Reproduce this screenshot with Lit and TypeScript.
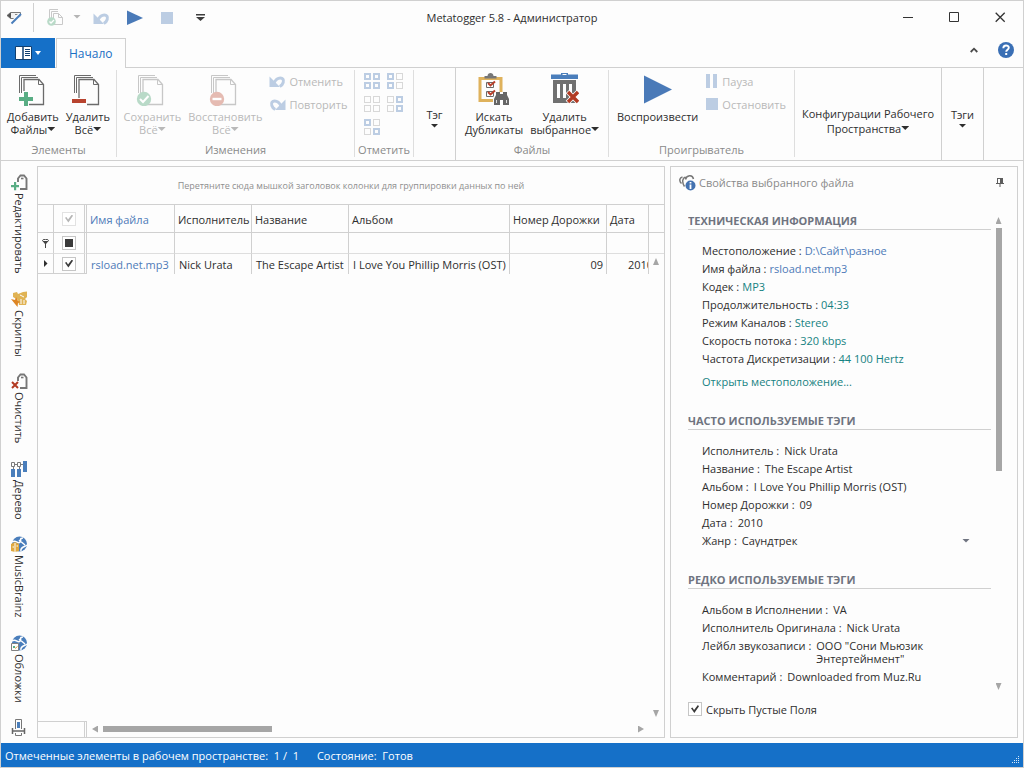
import { LitElement, html, css, svg, nothing } from "lit";
import { customElement, state } from "lit/decorators.js";
import { classMap } from "lit/directives/class-map.js";

/* ---------- icons ---------- */

const sheets = svg`
  <g fill="none" stroke="#6b6b6b" stroke-width="1">
    <path d="M2.5 20V2.5H19" /><path d="M4.5 20V4.5H21" />
    <path fill="#fdfdfd" d="M7 31.500V6.500H22L26.500 11.500V31.500Z" stroke-width="1.300" />
    <path d="M21.500 6.500V11.500H26.500" />
  </g>`;

const addIcon = html`<svg width="32" height="33" viewBox="0 0 32 33">${sheets}
  <path d="M6 18h6v5h5v6h-5v4H6v-4H1v-6h5z" fill="#fdfdfd" /><path d="M7 19h4v5h5v4h-5v5H7v-5H2v-4h5z" fill="#59ad84" /></svg>`;
const removeIcon = html`<svg width="32" height="33" viewBox="0 0 32 33">${sheets}
  <path d="M0 25h15v8H0z" fill="#fdfdfd" /><path d="M0 26h14v4H0z" fill="#b8432f" /></svg>`;
const saveIcon = html`<svg width="32" height="33" viewBox="0 0 32 33"><g opacity=".36">${sheets}</g>
  <circle cx="8" cy="26" r="7.200" fill="#b9dac8" /><path d="M4 26l3 3 5.500-6" fill="none" stroke="#fff" stroke-width="2" /></svg>`;
const restoreIcon = html`<svg width="32" height="33" viewBox="0 0 32 33"><g opacity=".36">${sheets}</g>
  <circle cx="8" cy="26" r="7.200" fill="#e5bbb2" /><path d="M3.500 26h9" stroke="#fff" stroke-width="2.400" /></svg>`;

const duplicatesIcon = html`<svg width="34" height="33" viewBox="0 0 34 33">
  <path d="M3 5.500h21V27.500H3z" fill="#fdfdfd" stroke="#dfb25c" stroke-width="3" />
  <path d="M7.500 5.500V3h3c0-4 6-4 6 0h3v2.500z" fill="#767676" />
  <g fill="none" stroke="#6b6b6b"><path d="M9.500 9.500h7v5h-7zM9.500 18.500h7v5h-7z" /></g>
  <g fill="none" stroke="#b9402b" stroke-width="2"><path d="M11 10l2.500 2.500L18 8.500M11 19l2.500 2.500L18 17.500" /></g>
  <path d="M16 32v-7l3-6h12v13z" fill="#fdfdfd" />
  <path d="M17 32v-6l2-4v-3h4v2h3v-2h4v3l2 4v6h-6v-5h-3v5z" fill="#666" />
  <path d="M19.500 27v3M29.500 27v3" stroke="#ddd" /></svg>`;
const trashIcon = html`<svg width="28" height="33" viewBox="0 0 28 33">
  <path d="M0 1.500h10V0h7v1.500h10V6H0z" fill="#4a7ebb" /><path d="M11.500 1.500h4" stroke="#fdfdfd" />
  <path d="M2 7h23v23H2z" fill="#707070" />
  <path d="M6 11h3v14H6zM12 11h3v14h-3zM18 11h3v14h-3z" fill="#fdfdfd" />
  <path d="M16.500 18.500l11 11M27.500 18.500l-11 11" stroke="#fdfdfd" stroke-width="5" />
  <path d="M17 19l10 10M27 19L17 29" stroke="#b23a22" stroke-width="3.400" /></svg>`;
const playBig = html`<svg width="28" height="33" viewBox="0 0 28 33"><path d="M0 2.500l28 14L0 30.500z" fill="#4a7ab8" /></svg>`;

const undoIcon = html`<svg width="17" height="14" viewBox="0 0 17 14">
  <path d="M.5 2.500V13H11z" fill="#bccde3" /><path d="M5 9C8 2 16 2.500 14.200 8.500C13.600 10.500 12.500 11.500 10.800 12.500" fill="none" stroke="#bccde3" stroke-width="3" /></svg>`;
const redoIcon = html`<svg width="17" height="14" viewBox="0 0 17 14">
  <path d="M16.500 2.500V13H6z" fill="#bccde3" /><path d="M12 9C9 2 1 2.500 2.800 8.500C3.400 10.500 4.500 11.500 6.200 12.500" fill="none" stroke="#bccde3" stroke-width="3" /></svg>`;
const pauseIcon = html`<svg width="14" height="14" viewBox="0 0 14 14"><path d="M1 0h4v14H1zM8 0h4v14H8z" fill="#bccde3" /></svg>`;
const stopIcon = html`<svg width="14" height="14" viewBox="0 0 14 14"><path d="M1 1h12v12H1z" fill="#bccde3" /></svg>`;

/* Four small boxes; the mask says which of them are marked. */
const markIcon = (mask: string) => html`<svg width="17" height="17" viewBox="0 0 17 17">
  ${[...mask].map((on, i) => {
    const x = (i % 2) * 9, y = Math.floor(i / 2) * 9;
    return on === "1"
      ? svg`<rect x=${x + 1} y=${y + 1} width="5" height="5" fill="none" stroke="#bccde3" stroke-width="2" />`
      : svg`<rect x=${x + 0.5} y=${y + 0.5} width="6" height="6" fill="none" stroke="#d8d8d8" />`;
  })}</svg>`;

const appIcon = html`<svg width="17" height="16" viewBox="0 0 17 16">
  <path d="M4.500 2.500H14.500V6.500L9 8.500H4.500L1 5.500z" fill="#f2f2f2" stroke="#7a7a7a" />
  <path d="M1 5.500l4-3v6z" fill="#555" /><path d="M9 4.500h5" stroke="#888" />
  <path d="M5.500 13.500L14 4.500" stroke="#fdfdfd" stroke-width="4" /><path d="M5.500 13.500L15 4" stroke="#4a7ebb" stroke-width="2" /></svg>`;
const quickSave = html`<svg width="17" height="17" viewBox="0 0 17 17">
  <g fill="none" stroke="#c9c9c9"><path d="M2.500 9V.5H11M4.500 9V2.500H11" /><path d="M6.500 15.500V4.500h5l4 4v7zM11.500 4.500v4h4" fill="#fdfdfd" /></g>
  <circle cx="4.500" cy="12.500" r="4.300" fill="#b9dac8" /><path d="M2.500 12.500l1.500 1.500 3-3" fill="none" stroke="#fff" stroke-width="1.300" /></svg>`;
const quickPlay = html`<svg width="16" height="16" viewBox="0 0 16 16"><path d="M0 .5l16 7.500-16 7z" fill="#4a7ab8" /></svg>`;
const customizeIcon = html`<svg width="9" height="7" viewBox="0 0 9 7"><path d="M0 0h9v1.500H0zM0 3h9L4.500 7z" fill="#3c3c3c" /></svg>`;
const menuIcon = html`<svg width="17" height="14" viewBox="0 0 17 14">
  <path d="M.5.500h16v13H.5z" fill="#fff" stroke="#103f70" /><path d="M8 1v12" stroke="#103f70" stroke-width="1.500" />
  <path d="M10 3.500h5M10 5.500h5M10 7.500h5M10 9.500h5" stroke="#103f70" /></svg>`;
const helpIcon = html`<svg width="16" height="16" viewBox="0 0 16 16"><circle cx="8" cy="8" r="8" fill="#3a6fb5" />
  <path d="M5.300 6.300c0-3.800 5.500-3.500 5.500-.6 0 1.900-2.600 2-2.600 4" fill="none" stroke="#fff" stroke-width="1.900" /><path d="M7.200 11h2v2h-2z" fill="#fff" /></svg>`;
const collapseIcon = html`<svg width="8" height="6" viewBox="0 0 8 6"><path d="M.7 5L4 1.700 7.300 5" fill="none" stroke="#4a4a4a" stroke-width="1.800" /></svg>`;
const minIcon = html`<svg width="11" height="11" viewBox="0 0 11 11"><path d="M0 5.500h10" stroke="#333" /></svg>`;
const maxIcon = html`<svg width="11" height="11" viewBox="0 0 11 11"><path d="M.5.500h9v9h-9z" fill="none" stroke="#333" /></svg>`;
const closeIcon = html`<svg width="11" height="11" viewBox="0 0 11 11"><path d="M.7.700l9 9M9.700.700l-9 9" stroke="#333" stroke-width="1.300" /></svg>`;

const tagOutline = svg`<path d="M7 8V4.500L9.500 1.500h3.500l2.500 3v10.500H9" fill="none" stroke="#777" stroke-width="1.900" /><path d="M10 4.500h2.500" stroke="#777" stroke-width="1.600" />`;
const globe = svg`<circle cx="8.500" cy="8" r="7.500" fill="#4a7ebb" />
  <path d="M1 6c4-3 6 3 8 0s-1-4 3-4M10 15c-1-4 4-4 6-6M8 4l6 5" fill="none" stroke="#fff" stroke-width="1.500" />`;
const sideIcons: Record<string, unknown> = {
  edit: html`<svg width="17" height="17" viewBox="0 0 17 17">${tagOutline}<path d="M3 8h2.200v3H8v2.200H5.200v3H3v-3H0V11h3z" fill="#59ad84" /></svg>`,
  scripts: html`<svg width="17" height="17" viewBox="0 0 17 17">
    <path d="M2 2l4-1 1 2 5-2 4-.5V6l-2 2 2 2-1 4H8L7 9 2 6z" fill="#e0b354" />
    <path d="M0 8l4 1 1-3 2 4 3 1-3 1-.5 4L4 13z" fill="#dd8523" /><path d="M9 4l4 2M10 8v5M13 9v4" stroke="#fdfdfd" /></svg>`,
  clear: html`<svg width="17" height="17" viewBox="0 0 17 17">${tagOutline}<path d="M1 9l6 6M7 9l-6 6" stroke="#b23a22" stroke-width="2" /></svg>`,
  tree: html`<svg width="17" height="17" viewBox="0 0 17 17"><g fill="none" stroke="#7b7b7b"><path d="M.5 1.500h3v4h-3zM6.500 1.500h3v4h-3zM3.500 3.500h3M9.500 3.500H12M2.500 6v3M8.500 6v3" /></g>
    <path d="M12 0h4v11h-4zM0 8h4v8H0zM6 8h4v8H6z" fill="#4a7ebb" /></svg>`,
  brainz: html`<svg width="17" height="17" viewBox="0 0 17 17">${globe}<path d="M0 8l4-2 4 2v7l-4 1-4-1z" fill="#dfa83f" /><path d="M4 7v9M1.500 11h1.500M5.500 10H7" stroke="#fff" /></svg>`,
  covers: html`<svg width="17" height="17" viewBox="0 0 17 17">${globe}<path d="M.5 8.500h7v7h-7z" fill="#fdfdfd" stroke="#808080" /><path d="M2 11h2v2H2z" fill="#59ad84" /><path d="M4 13.500l2.500-2" stroke="#e0a33f" /></svg>`,
  print: html`<svg width="17" height="17" viewBox="0 0 17 17"><path d="M4.500 10V.5h6V10" fill="none" stroke="#777" /><path d="M6 3h3v6H6z" fill="#4a7ebb" />
    <path d="M1.500 9v6M13.500 9v6M1 12h13" stroke="#666" stroke-width="1.500" /><path d="M4.500 14v2.500h6V14" fill="none" stroke="#777" /></svg>`,
};
const propertiesIcon = html`<svg width="17" height="17" viewBox="0 0 17 17">
  <g fill="none" stroke="#777" stroke-width="1.500"><path d="M2.500 9.500C-.5 6.500 1 3.500 3.500 3M5.500 12.500C2.500 8 3.500 4 6.500 3M6.500 5.500C7.500 1 13.500 0 14.500 5" /></g>
  <circle cx="11.500" cy="11.500" r="5" fill="#4472b0" /><path d="M11.500 8v1.500M11.500 10.500V15" stroke="#fff" stroke-width="1.800" /></svg>`;
const pinIcon = html`<svg width="8" height="9" viewBox="0 0 8 9"><path d="M1.500 0v5M0 5.500h8M4 6v3M1 .5h6" stroke="#5d5d5d" fill="none" /><path d="M4 0h3v5H4z" fill="#5d5d5d" /></svg>`;
const filterIcon = html`<svg width="7" height="9" viewBox="0 0 7 9"><ellipse cx="3.500" cy="1.500" rx="3" ry="1.200" fill="none" stroke="#444" /><path d="M.5 2l2.500 3v4h1V5l2.500-3z" fill="#444" /></svg>`;
const gripIcon = html`<svg width="8" height="8" viewBox="0 0 8 8">${[[6, 0], [4, 2], [6, 2], [2, 4], [4, 4], [6, 4], [0, 6], [2, 6], [4, 6], [6, 6]].map(
  ([x, y]) => svg`<rect x=${x} y=${y} width="1" height="1" fill="#d6e8f8" />`)}</svg>`;

const caret = html`<i class="caret"></i>`;

/* ---------- data ---------- */

const sideTabs = [
  ["edit", "Редактировать"], ["scripts", "Скрипты"], ["clear", "Очистить"], ["tree", "Дерево"],
  ["brainz", "MusicBrainz"], ["covers", "Обложки"], ["print", ""],
];
const columns = ["Имя файла", "Исполнитель", "Название", "Альбом", "Номер Дорожки", "Дата"];
const technical = [
  ["Местоположение :", "D:\\Сайт\\разное", "blue"], ["Имя файла :", "rsload.net.mp3", "blue"],
  ["Кодек :", "MP3", "teal"], ["Продолжительность :", "04:33", "teal"], ["Режим Каналов :", "Stereo", "teal"],
  ["Скорость потока :", "320 kbps", "teal"], ["Частота Дискретизации :", "44 100 Hertz", "teal"],
];
const common = [
  ["Исполнитель :", "Nick Urata"], ["Название :", "The Escape Artist"], ["Альбом :", "I Love You Phillip Morris (OST)"],
  ["Номер Дорожки :", "09"], ["Дата :", "2010"],
];
const rare = [
  ["Альбом в Исполнении :", "VA"], ["Исполнитель Оригинала :", "Nick Urata"],
  ["Лейбл звукозаписи :", 'ООО "Сони Мьюзик Энтертейнмент"'], ["Комментарий :", "Downloaded from Muz.Ru"],
];

const base = css`
  :host { --line: #d0d0d0; --soft: #dedede; --blue: #1570c8; --bg: #fdfdfd; --ink: #2e2e2e; }
  * { box-sizing: border-box; }
  svg { display: block; flex: none; }
  button { font: inherit; color: inherit; background: none; border: 0; margin: 0; padding: 0; }
  .caret { display: inline-block; width: 8px; height: 4px; background: currentColor; clip-path: polygon(0 0, 100% 0, 50% 100%); vertical-align: 3px; }
  .check { appearance: none; flex: none; display: block; width: 14px; height: 14px; margin: 0; border: 1px solid #c6c6c6; background: #fff; }
  .check:checked::before { content: ""; display: block; width: 8px; height: 8px; margin: 2px; background: #3a3a3a;
    clip-path: polygon(0 42%, 18% 30%, 38% 62%, 86% 0, 100% 16%, 42% 100%); }
  .check:disabled { border-color: #e2e2e2; }
  .check:disabled::before { background: #b5b5b5; }
  .check:indeterminate::before { content: ""; display: block; width: 8px; height: 8px; margin: 2px; background: #3a3a3a; clip-path: none; }
`;

@customElement("ribbon-bar")
class RibbonBar extends LitElement {
  static styles = [base, css`
    :host { display: block; }
    .tabs { display: flex; height: 30px; border-bottom: 1px solid var(--line); }
    .menu { display: flex; align-items: center; justify-content: center; gap: 3px; width: 54px; height: 30px; background: var(--blue); color: #fff; }
    .menu .caret { width: 6px; vertical-align: 0; }
    .tab { height: 30px; margin-left: 1px; padding: 0 12px; font-size: 12px; color: #1b6fc4; background: var(--bg); border: 1px solid var(--line); border-bottom: 0; }
    .tools { display: flex; align-items: center; gap: 20px; margin-left: auto; padding: 0 9px 6px 0; }
    .ribbon { display: flex; height: 93px; border-bottom: 1px solid var(--line); }
    .group { display: flex; flex-direction: column; flex: none; padding: 5px 0 3px; border-right: 1px solid transparent; }
    .group.short { border-image: linear-gradient(transparent 3px, var(--soft) 3px, var(--soft) 88px, transparent 88px) 1; }
    .group.full { border-right-color: var(--line); }
    .items { display: flex; flex: 1; align-items: flex-start; justify-content: center; gap: 7px; }
    .items.middle { align-items: center; padding-top: 12px; }
    .title { font-size: 11px; line-height: 14px; text-align: center; color: #8a8a8a; }
    .big { display: flex; flex-direction: column; align-items: center; font-size: 11px; line-height: 13px; white-space: nowrap; }
    .big .art { height: 37px; }
    .off { color: #b9b9b9; }
    .rows { display: flex; flex-direction: column; gap: 9px; padding-top: 1px; }
    .row { display: flex; align-items: center; gap: 3px; height: 14px; font-size: 11px; }
    .marks { display: grid; grid-template-columns: 17px 17px; gap: 6px; }
    .w1 { width: 116px; } .w2 { width: 238px; } .w3 { width: 59px; } .w4 { width: 42px; }
    .w5 { width: 153px; } .w6 { width: 186px; } .w7 { width: 147px; }
    .configs { line-height: 15px; }
    .tag { gap: 3px; padding-bottom: 6px; line-height: 12px; }
  `];

  private big(icon: unknown, first: string, second: string, drop: boolean, off = false) {
    return html`<button class=${classMap({ big: true, off })} ?disabled=${off}>
      <span class="art">${icon}</span><span>${first}</span>
      ${second ? html`<span>${second}${drop ? caret : nothing}</span>` : nothing}</button>`;
  }
  private small(icon: unknown, label: string) {
    return html`<button class="row off" disabled>${icon}<span>${label}</span></button>`;
  }

  render() {
    return html`
      <div class="tabs">
        <button class="menu" aria-label="Меню">${menuIcon}${caret}</button>
        <button class="tab">Начало</button>
        <div class="tools"><button aria-label="Свернуть ленту">${collapseIcon}</button><button aria-label="Справка">${helpIcon}</button></div>
      </div>
      <div class="ribbon">
        <div class="group short w1"><div class="items">
          ${this.big(addIcon, "Добавить", "Файлы", true)}${this.big(removeIcon, "Удалить", "Всё", true)}
        </div><div class="title">Элементы</div></div>
        <div class="group short w2"><div class="items">
          ${this.big(saveIcon, "Сохранить", "Всё", true, true)}${this.big(restoreIcon, "Восстановить", "Всё", true, true)}
          <div class="rows">${this.small(undoIcon, "Отменить")}${this.small(redoIcon, "Повторить")}</div>
        </div><div class="title">Изменения</div></div>
        <div class="group short w3"><div class="items"><div class="marks">
          ${["1111", "1010", "0000", "0101", "1001"].map((m) => html`<button disabled aria-label="Отметить">${markIcon(m)}</button>`)}
        </div></div><div class="title">Отметить</div></div>
        <div class="group full w4"><div class="items middle"><button class="big tag"><span>Тэг</span>${caret}</button></div></div>
        <div class="group short w5"><div class="items">
          ${this.big(duplicatesIcon, "Искать", "Дубликаты", false)}${this.big(trashIcon, "Удалить", "выбранное", true)}
        </div><div class="title">Файлы</div></div>
        <div class="group short w6"><div class="items">
          ${this.big(playBig, "Воспроизвести", "", false)}
          <div class="rows">${this.small(pauseIcon, "Пауза")}${this.small(stopIcon, "Остановить")}</div>
        </div><div class="title">Проигрыватель</div></div>
        <div class="group full w7"><div class="items middle">
          <button class="big configs"><span>Конфигурации Рабочего</span><span>Пространства${caret}</span></button></div></div>
        <div class="group full w4"><div class="items middle"><button class="big tag"><span>Тэги</span>${caret}</button></div></div>
      </div>`;
  }
}

@customElement("track-grid")
class TrackGrid extends LitElement {
  static styles = [base, css`
    :host { display: flex; flex-direction: column; position: relative; border: 1px solid var(--line); overflow: hidden; font-size: 11px; }
    .hint { height: 38px; line-height: 37px; text-align: center; font-size: 9px; color: #8f8f8f; border-bottom: 1px solid var(--line); }
    table { width: 100%; table-layout: fixed; border-spacing: 0; white-space: nowrap; }
    th, td { height: 21px; padding: 0 3px; text-align: left; font-weight: 400; overflow: hidden; border-right: 1px solid var(--line); border-bottom: 1px solid var(--soft); }
    th { height: 28px; padding-top: 2px; border-bottom-color: var(--line); }
    th:last-child, td:last-child { border-right: 0; }
    .double { border-right: 3px double var(--line); }
    .data td { height: 20px; padding-left: 4px; border-bottom: 0; }
    .data .mark { border-bottom: 1px solid var(--line); }
    .data .mark, .mark { padding: 0; }
    .mark svg, .mark .caret, .check { margin: 0 auto; }
    .mark .caret { display: block; width: 4px; height: 8px; clip-path: polygon(0 0, 100% 50%, 0 100%); }
    .c1 { width: 16px; } .c2 { width: 33px; } .c3 { width: 88px; } .c4 { width: 77px; }
    .c5, .c7 { width: 97px; } .c6 { width: 161px; } .c8 { width: 42px; }
    .link { color: #4d7ab8; text-decoration: none; }
    .data .num { text-align: right; }
    .data .year { padding: 0 0 0 21px; text-overflow: clip; }
    .filter input[type="text"] { display: block; width: 100%; height: 18px; padding: 0; border: 0; outline: 0; background: none; font: inherit; }
    .foot { display: flex; align-items: center; gap: 5px; height: 16px; margin-top: auto; }
    .corner { width: 49px; height: 16px; border-top: 1px solid var(--line); border-right: 3px double var(--line); }
    .thumb { width: 169px; height: 6px; margin-right: auto; background: #a6a6a6; }
    .arrow { width: 6px; height: 7px; background: #a6a6a6; }
    .left { clip-path: polygon(100% 0, 100% 100%, 0 50%); }
    .right { margin-right: 20px; clip-path: polygon(0 0, 100% 50%, 0 100%); }
    .up { clip-path: polygon(0 100%, 50% 0, 100% 100%); }
    .down { clip-path: polygon(0 0, 100% 0, 50% 100%); }
    .vscroll { position: absolute; top: 91px; right: 5px; bottom: 20px; display: flex; flex-direction: column; justify-content: space-between; }
  `];

  render() {
    return html`
      <div class="hint">Перетяните сюда мышкой заголовок колонки для группировки данных по ней</div>
      <table>
        <colgroup>${[1, 2, 3, 4, 5, 6, 7, 8, 9].map((n) => html`<col class="c${n}">`)}</colgroup>
        <thead><tr><th></th><th class="double mark"><input class="check" type="checkbox" checked disabled aria-label="Все"></th>
          ${columns.map((c, i) => html`<th>${i ? c : html`<span class="link">${c}</span>`}</th>`)}<th></th></tr></thead>
        <tbody>
          <tr class="filter"><td class="mark">${filterIcon}</td><td class="double mark"><input class="check" type="checkbox" .indeterminate=${true} aria-label="Фильтр отметки"></td>
            ${columns.map((c) => html`<td><input type="text" aria-label=${c}></td>`)}<td></td></tr>
          <tr class="data"><td class="mark"><i class="caret"></i></td><td class="double mark"><input class="check" type="checkbox" checked aria-label="rsload.net.mp3"></td>
            <td><a class="link" href="#">rsload.net.mp3</a></td><td>Nick Urata</td><td>The Escape Artist</td>
            <td>I Love You Phillip Morris (OST)</td><td class="num">09</td><td class="year">2010</td><td></td></tr>
        </tbody>
      </table>
      <div class="foot"><div class="corner"></div><i class="arrow left"></i><div class="thumb"></div><i class="arrow right"></i></div>
      <div class="vscroll"><i class="arrow up"></i><i class="arrow down"></i></div>`;
  }
}

@customElement("file-properties")
class FileProperties extends LitElement {
  @state() private hideEmpty = true;

  static styles = [base, css`
    :host { display: flex; flex-direction: column; border: 1px solid var(--line); padding: 7px 15px 21px 8px; font-size: 11px; }
    .head { display: flex; align-items: center; gap: 3px; height: 17px; font-size: 11px; color: #8a8a8a; }
    .head button { margin: 0 -2px 0 auto; }
    .body { display: flex; flex: 1; min-height: 0; margin: 19px 0 9px 9px; }
    .content { flex: 1; min-width: 0; overflow: hidden; }
    h2 { height: 20px; line-height: 21px; margin: 0 0 12px; font-size: 11px; font-weight: 700; color: #6f7480; border-bottom: 1px solid var(--line); }
    section + section { margin-top: 19px; }
    .pair { display: flex; gap: 3px; padding: 2px 14px 3px; line-height: 13px; color: var(--ink); }
    .wide { gap: 5px; }
    .pair > span:last-child { max-width: 140px; }
    .pair > .long { max-width: 180px; white-space: nowrap; }
    .blue, .teal { text-decoration: none; }
    .pair .blue { color: #4d7ab8; }
    .teal, .pair .teal { color: #168282; }
    .open { display: block; margin: 5px 14px 0; line-height: 18px; }
    .genre { align-items: center; padding-right: 21px; }
    select { appearance: none; flex: 1; height: 13px; padding: 0; border: 0; background: none; font: inherit; line-height: 13px; color: inherit; }
    .genre .caret { color: #6f7480; vertical-align: 0; }
    .scroll { display: flex; flex-direction: column; align-items: center; gap: 4px; width: 7px; margin: 7px 0 3px 4px; }
    .up, .down { width: 6px; height: 7px; background: #a6a6a6; }
    .up { clip-path: polygon(0 100%, 50% 0, 100% 100%); }
    .down { margin-top: auto; clip-path: polygon(0 0, 100% 0, 50% 100%); }
    .thumb { width: 6px; height: 243px; background: #a6a6a6; }
    .hide { display: flex; align-items: center; gap: 4px; margin-left: 9px; height: 14px; }
  `];

  private pairs(list: string[][]) {
    return list.map(([k, v]) => html`<div class="pair wide"><span>${k}</span><span class=${v.startsWith("ООО") ? "" : "long"}>${v}</span></div>`);
  }

  render() {
    return html`
      <div class="head">${propertiesIcon}<span>Свойства выбранного файла</span><button aria-label="Закрепить">${pinIcon}</button></div>
      <div class="body">
        <div class="content">
          <section><h2>ТЕХНИЧЕСКАЯ ИНФОРМАЦИЯ</h2>
            ${technical.map(([k, v, tone]) => html`<div class="pair"><span>${k}</span>${tone === "blue"
              ? html`<a class="blue" href="#">${v}</a>` : html`<span class="teal">${v}</span>`}</div>`)}
            <a class="teal open" href="#">Открыть местоположение...</a></section>
          <section><h2>ЧАСТО ИСПОЛЬЗУЕМЫЕ ТЭГИ</h2>
            ${this.pairs(common)}
            <div class="pair wide genre"><label for="genre">Жанр :</label><select id="genre"><option>Саундтрек</option></select>${caret}</div></section>
          <section><h2>РЕДКО ИСПОЛЬЗУЕМЫЕ ТЭГИ</h2>${this.pairs(rare)}</section>
        </div>
        <div class="scroll"><i class="up"></i><div class="thumb"></div><i class="down"></i></div>
      </div>
      <label class="hide"><input class="check" type="checkbox" .checked=${this.hideEmpty}
        @change=${(e: Event) => (this.hideEmpty = (e.target as HTMLInputElement).checked)}>Скрыть Пустые Поля</label>`;
  }
}

@customElement("app-root")
class AppRoot extends LitElement {
  static styles = [base, css`
    :host { display: flex; flex-direction: column; box-sizing: border-box; height: 100vh; border: 1px solid var(--line); background: var(--bg); color: var(--ink);
      font-family: "Open Sans", "Noto Sans", sans-serif; font-size: 11px; }
    .titlebar { display: grid; grid-template-columns: 1fr auto 1fr; align-items: center; height: 37px; flex: none; padding-bottom: 4px; }
    .quick { display: flex; align-items: center; padding-left: 5px; }
    .split { width: 1px; height: 29px; margin: 0 13px 0 10px; background: var(--line); }
    .quick .soft { color: #b5b5b5; margin: 0 12px 0 9px; line-height: 8px; }
    .quick .gap { margin-left: 17px; }
    .quick .stop { margin-left: 17px; } .quick .custom { margin-left: 22px; }
    h1 { margin: 0; font-size: 11px; font-weight: 400; }
    .window { display: flex; justify-content: flex-end; gap: 35px; padding-right: 17px; }
    .work { display: flex; flex: 1; min-height: 0; padding: 5px 5px 5px 0; }
    nav { display: flex; flex-direction: column; gap: 17px; width: 36px; flex: none; padding: 8px 0 0 10px; overflow: hidden; }
    nav button { display: flex; flex-direction: column; align-items: center; gap: 2px; width: 17px; flex: none; }
    nav span { writing-mode: vertical-rl; line-height: 17px; font-size: 11px; }
    track-grid { flex: 1; min-width: 0; }
    file-properties { flex: none; width: 348px; margin-left: 5px; }
    footer { display: flex; align-items: center; gap: 18px; height: 24px; flex: none; padding: 0 3px 0 4px; background: var(--blue); color: #fff; }
    .grip { margin: auto 0 3px auto; }
  `];

  render() {
    return html`
      <header class="titlebar">
        <div class="quick">${appIcon}<div class="split"></div>
          <button disabled aria-label="Сохранить">${quickSave}</button><button class="soft" disabled aria-label="Ещё">${caret}</button>
          <button disabled aria-label="Отменить">${undoIcon}</button><button class="gap" aria-label="Воспроизвести">${quickPlay}</button>
          <button class="stop" disabled aria-label="Остановить">${stopIcon}</button><button class="custom" aria-label="Настроить панель">${customizeIcon}</button></div>
        <h1>Metatogger 5.8 - Администратор</h1>
        <div class="window"><button aria-label="Свернуть">${minIcon}</button><button aria-label="Развернуть">${maxIcon}</button><button aria-label="Закрыть">${closeIcon}</button></div>
      </header>
      <ribbon-bar></ribbon-bar>
      <main class="work">
        <nav>${sideTabs.map(([icon, label]) => html`<button aria-label=${label || "Печать"}>${sideIcons[icon]}${label ? html`<span>${label}</span>` : nothing}</button>`)}</nav>
        <track-grid></track-grid>
        <file-properties></file-properties>
      </main>
      <footer><span>Отмеченные элементы в рабочем пространстве: &nbsp;1 / &nbsp;1</span><span>Состояние: &nbsp;Готов</span><span class="grip">${gripIcon}</span></footer>`;
  }
}
